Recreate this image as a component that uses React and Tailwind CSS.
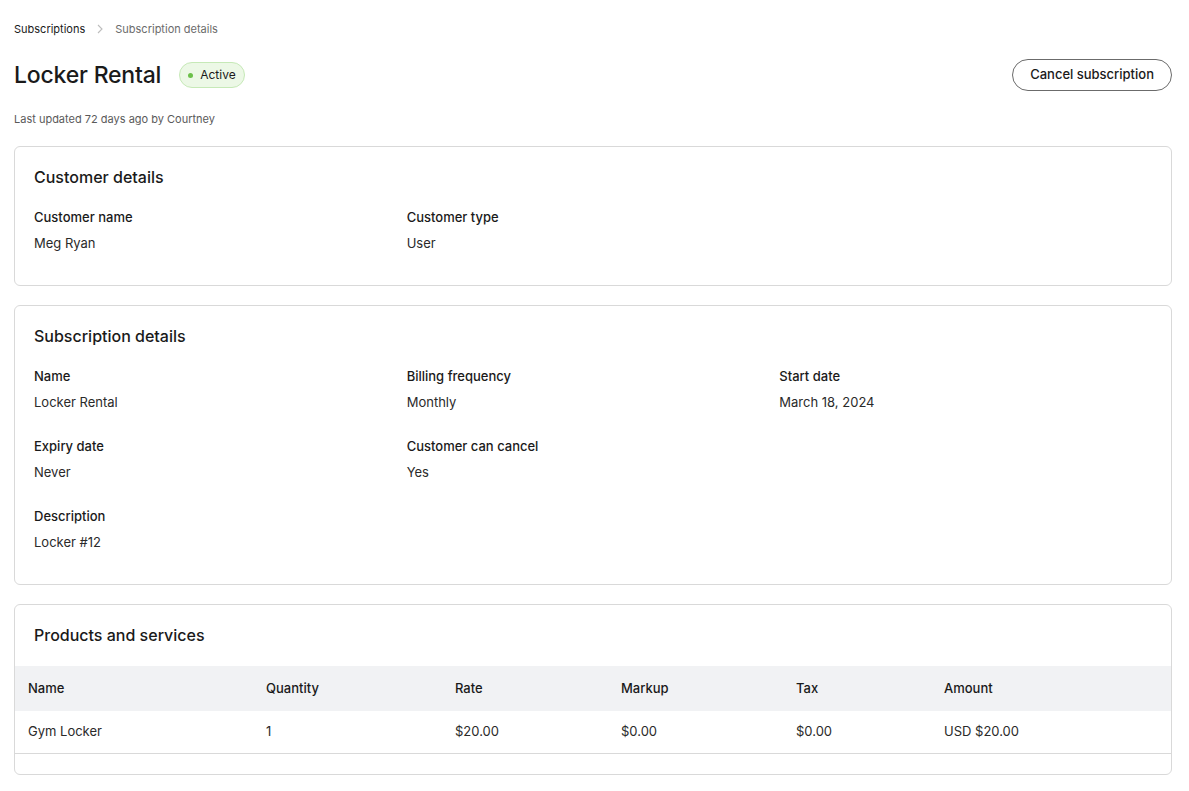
import React from 'react';

const Field = ({ label, value }) => (
  <div>
    <div className="text-[13px] font-medium text-[#1a1a1a] leading-[18px]">{label}</div>
    <div className="text-[13px] text-[#2a2a2a] leading-[18px] mt-[8px]">{value}</div>
  </div>
);

const Card = ({ title, children, className = '' }) => (
  <section className={`bg-white border border-[#d9d9d9] rounded-[6px] ${className}`}>
    <h2 className="px-[19px] pt-[19px] text-[16px] font-medium text-[#1a1a1a] leading-[22px]">{title}</h2>
    {children}
  </section>
);

const columns = [
  { key: 'name', label: 'Name', w: 'w-[238px]' },
  { key: 'qty', label: 'Quantity', w: 'w-[189px]' },
  { key: 'rate', label: 'Rate', w: 'w-[166px]' },
  { key: 'markup', label: 'Markup', w: 'w-[175px]' },
  { key: 'tax', label: 'Tax', w: 'w-[148px]' },
  { key: 'amount', label: 'Amount', w: '' },
];

const items = [
  { name: 'Gym Locker', qty: '1', rate: '$20.00', markup: '$0.00', tax: '$0.00', amount: 'USD $20.00' },
];

export default function App() {
  return (
    <div className="min-h-screen bg-white pl-[14px] pr-[17px] pt-[20px] pb-[20px] font-['Inter','Noto_Sans',sans-serif] text-[#1a1a1a]">
      {/* Breadcrumb */}
      <nav className="flex items-center text-[11px] leading-[18px]">
        <span className="text-[#1a1a1a]">Subscriptions</span>
        <svg className="mx-[11px]" width="8" height="10" viewBox="0 0 8 10" fill="none">
          <path d="M2 1l4 4-4 4" stroke="#bdbdbd" strokeWidth="1.1" />
        </svg>
        <span className="text-[#6b6b6b]">Subscription details</span>
      </nav>

      {/* Header */}
      <div className="flex items-center justify-between mt-[21px]">
        <div className="flex items-center">
          <h1 className="text-[23px] font-medium leading-[32px] tracking-[-0.2px]">Locker Rental</h1>
          <span className="ml-[18px] inline-flex items-center h-[26px] px-[8px] rounded-full bg-[#ecf8e6] border border-[#c6e9b7] text-[12px] text-[#1a1a1a]">
            <span className="w-[5px] h-[5px] rounded-full bg-[#6cc04a] mr-[7px]" />
            Active
          </span>
        </div>
        <button className="h-[32px] px-[17px] rounded-full border border-[#6b6b6b] text-[13px] font-medium text-[#1a1a1a] bg-white">
          Cancel subscription
        </button>
      </div>

      <p className="text-[11px] text-[#5a5a5a] mt-[20px] leading-[16px]">Last updated 72 days ago by Courtney</p>

      <div className="flex flex-col gap-[19px] mt-[19px]">
        <Card title="Customer details" className="h-[140px]">
          <div className="grid grid-cols-3 px-[19px] mt-[20px]">
            <Field label="Customer name" value="Meg Ryan" />
            <Field label="Customer type" value="User" />
          </div>
        </Card>

        <Card title="Subscription details" className="h-[280px]">
          <div className="grid grid-cols-3 gap-y-[26px] px-[19px] mt-[20px]">
            <Field label="Name" value="Locker Rental" />
            <Field label="Billing frequency" value="Monthly" />
            <Field label="Start date" value="March 18, 2024" />
            <Field label="Expiry date" value="Never" />
            <Field label="Customer can cancel" value="Yes" />
            <div />
            <Field label="Description" value="Locker #12" />
          </div>
        </Card>

        <Card title="Products and services" className="pb-[20px] overflow-hidden">
          <table className="w-full mt-[20px] text-[13px] border-collapse">
            <thead>
              <tr className="bg-[#f1f2f4] h-[45px]">
                {columns.map((c) => (
                  <th key={c.key} className={`${c.w} text-left font-medium pl-[13px] text-[#1a1a1a]`}>
                    {c.label}
                  </th>
                ))}
              </tr>
            </thead>
            <tbody>
              {items.map((it) => (
                <tr key={it.name} className="h-[42px] border-b border-[#d9d9d9]">
                  {columns.map((c) => (
                    <td key={c.key} className="pl-[13px] text-[#2a2a2a]">
                      {it[c.key]}
                    </td>
                  ))}
                </tr>
              ))}
            </tbody>
          </table>
        </Card>
      </div>
    </div>
  );
}
